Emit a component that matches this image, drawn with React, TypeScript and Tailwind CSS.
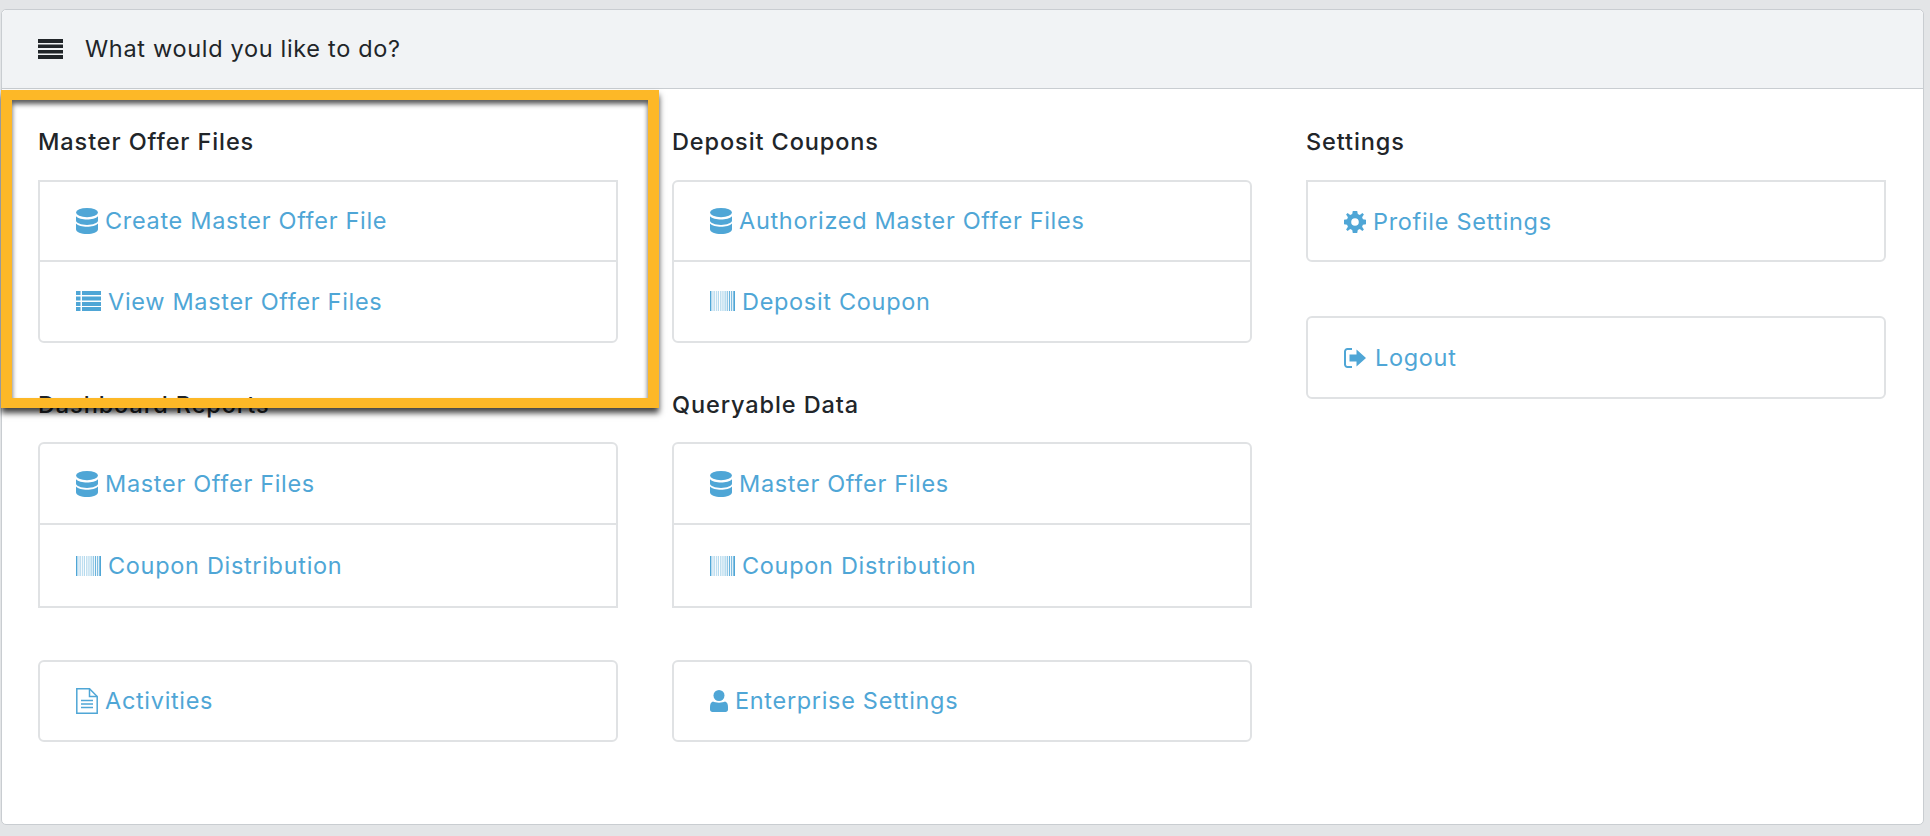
import React from "react";

const Db = () => (
  <svg viewBox="0 0 22 26" className="w-[22px] h-[26px] shrink-0 fill-current">
    <ellipse cx="11" cy="4.6" rx="11" ry="4.6" />
    <path d="M0 8.2C2 10.6 6.5 11.4 11 11.4S20 10.6 22 8.2V12.6C22 15 17 17 11 17S0 15 0 12.6Z" />
    <path d="M0 15.6C2 18 6.5 18.8 11 18.8S20 18 22 15.6V21.2C22 24 17 26 11 26S0 24 0 21.2Z" />
  </svg>
);
const ListI = () => (
  <svg viewBox="0 0 25 20" className="w-[25px] h-[20px] shrink-0 fill-current">
    <rect x="0" y="0" width="4.5" height="4" /><rect x="6" y="0" width="19" height="4" />
    <rect x="0" y="5.5" width="4.5" height="4" /><rect x="6" y="5.5" width="19" height="4" />
    <rect x="0" y="11" width="4.5" height="4" /><rect x="6" y="11" width="19" height="4" />
    <rect x="0" y="16" width="4.5" height="4" /><rect x="6" y="16" width="19" height="4" />
  </svg>
);
const Barcode = () => (
  <svg viewBox="0 0 25 20" className="w-[25px] h-[20px] shrink-0 fill-current">
    {[[0,1.4,1],[2.6,.8,.55],[4.3,.8,.5],[6.2,1,.45],[8.2,.7,.6],[10,.7,.5],[11.7,.8,.55],[13.6,.8,.6],[15.4,.9,.65],[17.2,.9,.75],[19,1.1,.85],[21.2,1,.9],[23.3,1.7,1]].map(([x,w,o],i)=>(
      <rect key={i} x={x} y="0" width={w} height="20" opacity={o} />
    ))}
  </svg>
);
const FileI = () => (
  <svg viewBox="0 0 22 26" className="w-[22px] h-[26px] shrink-0 fill-none stroke-current" strokeWidth="1.5">
    <path d="M.8.8H13.5L21.2 8.5V25.2H.8Z" />
    <path d="M13.5.8V8.5H21.2" />
    <path d="M5 12.5H17M5 16H17M5 19.5H17" strokeWidth="1.6" />
  </svg>
);
const User = () => (
  <svg viewBox="0 0 18 22" className="w-[18px] h-[22px] shrink-0 fill-current">
    <circle cx="9" cy="5.5" r="5.5" />
    <path d="M3 11.5C5 13 13 13 15 11.5 17 12 18 14 18 17V19.5C18 21 17 22 15.5 22H2.5C1 22 0 21 0 19.5V17C0 14 1 12 3 11.5Z" />
  </svg>
);
const Gear = () => (
  <svg viewBox="0 0 22 22" className="w-[22px] h-[22px] shrink-0 fill-current">
    <path fillRule="evenodd" d="M8.8 0H13.2L13.8 3.1 15.8 3.9 18.4 2.1 19.9 3.6 18.1 6.2 18.9 8.2 22 8.8V13.2L18.9 13.8 18.1 15.8 19.9 18.4 18.4 19.9 15.8 18.1 13.8 18.9 13.2 22H8.8L8.2 18.9 6.2 18.1 3.6 19.9 2.1 18.4 3.9 15.8 3.1 13.8 0 13.2V8.8L3.1 8.2 3.9 6.2 2.1 3.6 3.6 2.1 6.2 3.9 8.2 3.1ZM11 7.2A3.8 3.8 0 1 0 11 14.8 3.8 3.8 0 1 0 11 7.2Z" />
  </svg>
);
const Logout = () => (
  <svg viewBox="0 0 22 22" className="w-[22px] h-[22px] shrink-0 mr-[2px] fill-current">
    <path d="M8 1H3.5C1.6 1 0 2.6 0 4.5V17.5C0 19.4 1.6 21 3.5 21H8V19H3.5C2.7 19 2 18.3 2 17.5V4.5C2 3.7 2.7 3 3.5 3H8Z" />
    <path d="M12.5 2.5L22 11 12.5 19.5V14.5H5.5V7.5H12.5Z" />
  </svg>
);
const Menu = () => (
  <svg viewBox="0 0 25 20" className="w-[25px] h-[20px] shrink-0 fill-[#212529]">
    <rect y="0" width="25" height="4" /><rect y="5.5" width="25" height="3.5" /><rect y="11" width="25" height="3.5" /><rect y="16" width="25" height="4" />
  </svg>
);

type Item = { icon: React.ReactNode; label: string };

function Group({ items, rounded, rowH = "h-[79.5px]", className }: { items: Item[]; rounded: string; rowH?: string; className?: string }) {
  return (
    <div className={`border-2 border-[#e0e2e4] bg-white divide-y-2 divide-[#e0e2e4] ${rounded} ${className ?? ""}`}>
      {items.map((it) => (
        <a key={it.label} className={`${rowH} pl-[36px] flex items-center gap-[7px] text-[#4fa6d6] text-[23.5px] tracking-[0.68px]`}>
          {it.icon}
          <span>{it.label}</span>
        </a>
      ))}
    </div>
  );
}

function Heading({ children, className }: { children: React.ReactNode; className?: string }) {
  return <h5 className={`h-[32px] leading-[32px] text-[23.5px] font-[450] tracking-[0.9px] text-[#212529] ${className ?? ""}`}>{children}</h5>;
}

export default function App() {
  return (
    <div className="h-[836px] bg-[#e3e5e7] pt-[9px] pl-[1px] pr-[6px] overflow-hidden" style={{ fontFamily: "Inter, 'Noto Sans', sans-serif" }}>
      <div className="relative h-[816px] bg-white border border-[#c9cdd1] rounded-[5px] overflow-visible">
        <div className="h-[79px] bg-[#f1f3f5] border-b border-[#c9cdd1] rounded-t-[5px] flex items-center pl-[36px] gap-[22px] text-[23.5px] tracking-[0.68px] text-[#212529]">
          <Menu />
          <span>What would you like to do?</span>
        </div>

        <div className="grid grid-cols-3 gap-x-[54px] pl-[36px] pr-[37px] pt-[37px]">
          <div className="flex flex-col">
            <Heading className="mb-[22px]">Master Offer Files</Heading>
            <Group rounded="rounded-b-[6px]" items={[
              { icon: <Db />, label: "Create Master Offer File" },
              { icon: <ListI />, label: "View Master Offer Files" },
            ]} />
            <Heading className="mt-[46px] mb-[21px]">Dashboard Reports</Heading>
            <Group rounded="rounded-t-[6px]" rowH="h-[81px]" items={[
              { icon: <Db />, label: "Master Offer Files" },
              { icon: <Barcode />, label: "Coupon Distribution" },
            ]} />
            <Group className="mt-[52px]" rounded="rounded-[6px]" rowH="h-[78px]" items={[{ icon: <FileI />, label: "Activities" }]} />
          </div>
          <div className="flex flex-col">
            <Heading className="mb-[22px]">Deposit Coupons</Heading>
            <Group rounded="rounded-[6px]" items={[
              { icon: <Db />, label: "Authorized Master Offer Files" },
              { icon: <Barcode />, label: "Deposit Coupon" },
            ]} />
            <Heading className="mt-[46px] mb-[21px]">Queryable Data</Heading>
            <Group rounded="rounded-t-[6px]" rowH="h-[81px]" items={[
              { icon: <Db />, label: "Master Offer Files" },
              { icon: <Barcode />, label: "Coupon Distribution" },
            ]} />
            <Group className="mt-[52px]" rounded="rounded-[6px]" rowH="h-[78px]" items={[{ icon: <User />, label: "Enterprise Settings" }]} />
          </div>
          <div className="flex flex-col">
            <Heading className="mb-[22px]">Settings</Heading>
            <Group rounded="rounded-b-[6px]" rowH="h-[78px] pt-[1px]" items={[{ icon: <Gear />, label: "Profile Settings" }]} />
            <Group className="mt-[54px]" rounded="rounded-[6px]" rowH="h-[79px]" items={[{ icon: <Logout />, label: "Logout" }]} />
          </div>
        </div>

        <div className="absolute left-[-1px] top-[80px] w-[658px] h-[318px] border-x-[11px] border-y-[10px] border-[#fdb827] shadow-[0_5px_6px_rgba(0,0,0,0.75),inset_0_4px_5px_rgba(0,0,0,0.65)]" />
      </div>
    </div>
  );
}
